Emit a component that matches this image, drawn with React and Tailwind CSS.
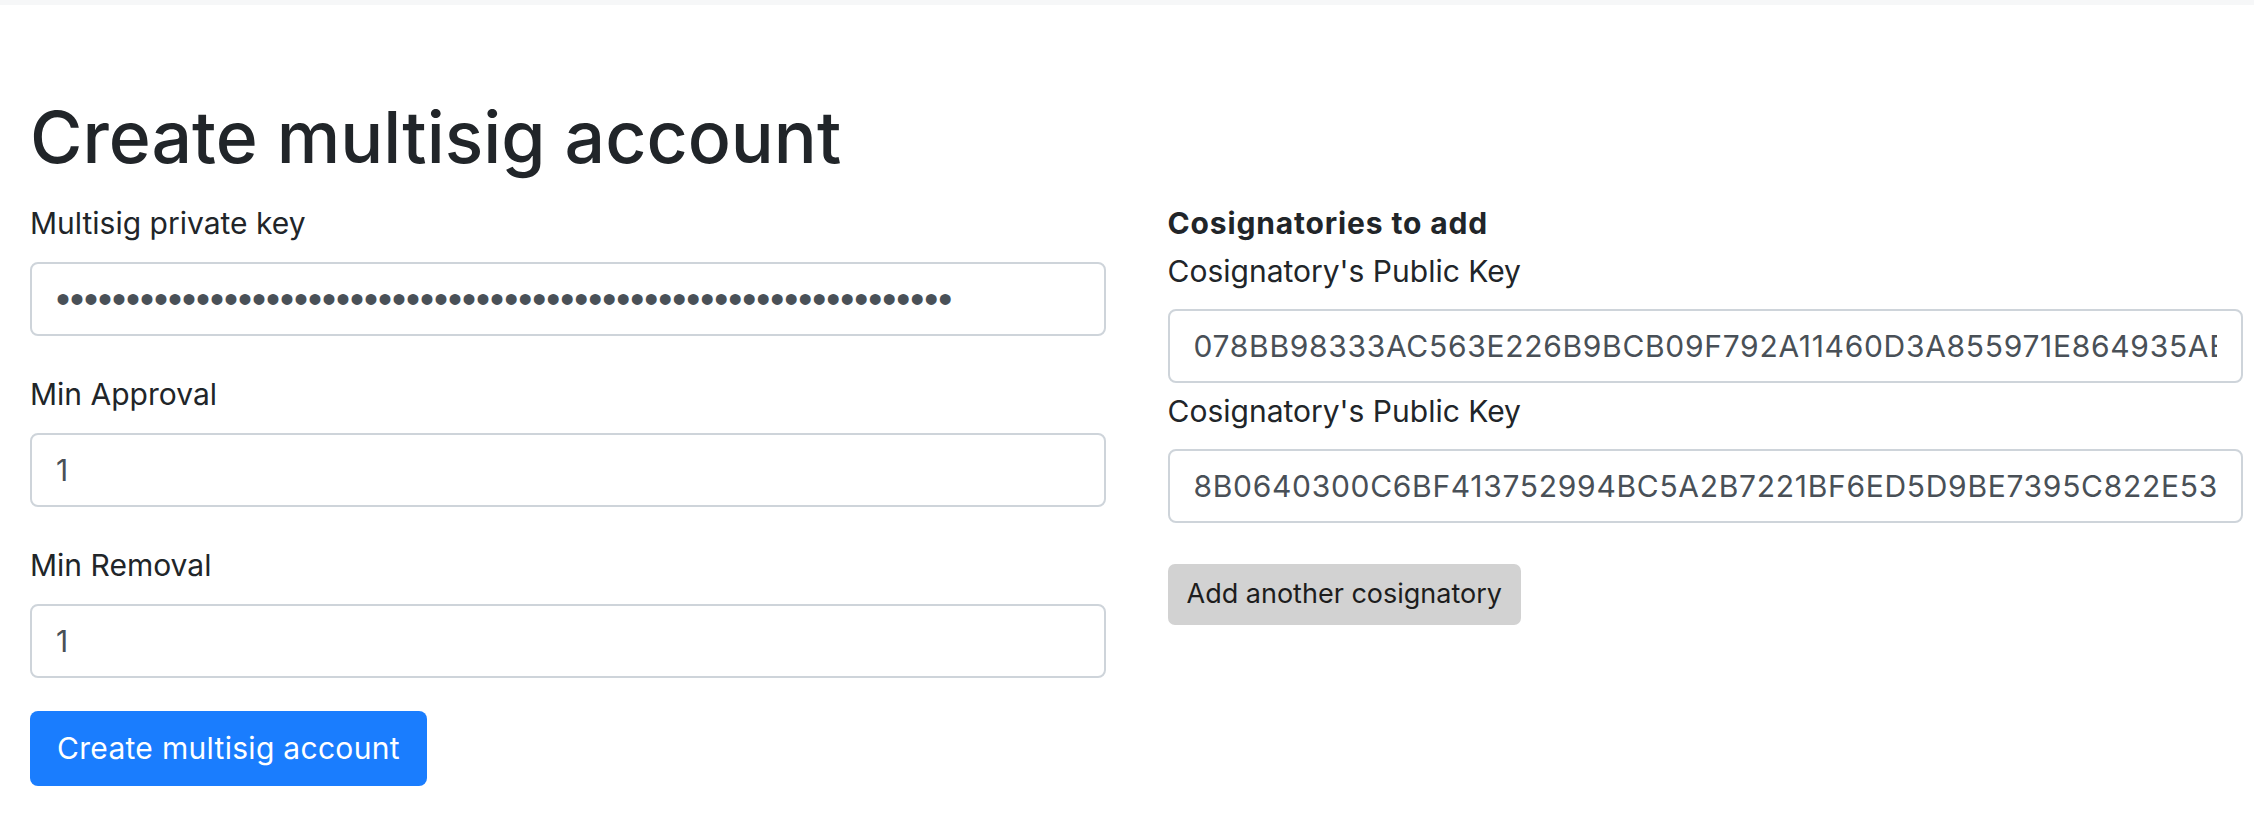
const privateKey = "5F2A9C81D47E03B6A1C9E2F4D8B0763A5E1C9D2F4B8A06E3C7D1F95B2A4E806C";

const cosignatories = [
    "078BB98333AC563E226B9BCB09F792A11460D3A855971E864935AB2F4C17D0E6",
    "8B0640300C6BF413752994BC5A2B7221BF6ED5D9BE7395C822E53A8C0F1D2E47",
];

const Field = ({ type = "text", value, className = "" }) => (
    <input
        type={type}
        defaultValue={value}
        readOnly
        className={`block w-full h-[74px] rounded-[8px] border-2 border-[#ced4da] bg-white px-[24px] text-[#495057] outline-none ${className}`}
    />
);

const Label = ({ children, className = "" }) => (
    <label className={`block text-[30px] leading-[42px] ${className}`}>{children}</label>
);

export default function App() {
    return (
        <div className="min-h-screen bg-white font-['Inter',sans-serif] text-[#212529]">
            {/* navbar edge */}
            <div className="h-[5px] bg-[#f6f7f8]" />

            <div className="pl-[30px] pr-[11px]">
                <h1 className="mt-[89px] text-[71.5px] leading-[86px] font-medium">Create multisig account</h1>

                <div className="mt-[22px] grid grid-cols-2 gap-x-[62px]">
                    {/* Multisig settings */}
                    <form className="flex flex-col items-start">
                        <Label>Multisig private key</Label>
                        <Field
                            type="password"
                            value={privateKey}
                            className="mt-[18px] font-['Liberation_Sans',sans-serif] text-[40px]"
                        />

                        <Label className="mt-[37px]">Min Approval</Label>
                        <Field value="1" className="mt-[18px] text-[30px]" />

                        <Label className="mt-[37px]">Min Removal</Label>
                        <Field value="1" className="mt-[18px] text-[30px]" />

                        <button
                            type="button"
                            className="mt-[33px] h-[75px] rounded-[8px] bg-[#1a7dfe] px-[27px] text-[30px] tracking-[0.3px] text-white"
                        >
                            Create multisig account
                        </button>
                    </form>

                    {/* Cosignatories */}
                    <div className="flex flex-col items-start">
                        <div className="text-[30px] leading-[42px] font-bold tracking-[0.85px]">Cosignatories to add</div>
                        {cosignatories.map((key, i) => (
                            <div key={key} className={`w-full ${i === 0 ? "mt-[6px]" : "mt-[7px]"}`}>
                                <Label>Cosignatory's Public Key</Label>
                                <Field value={key} className="mt-[17px] text-[30px] tracking-[0.7px]" />
                            </div>
                        ))}
                        <button
                            type="button"
                            className="mt-[41px] h-[61px] rounded-[7px] bg-[#d2d2d2] px-[19px] text-[27px] text-[#1d1d1d]"
                        >
                            Add another cosignatory
                        </button>
                    </div>
                </div>
            </div>
        </div>
    );
}
